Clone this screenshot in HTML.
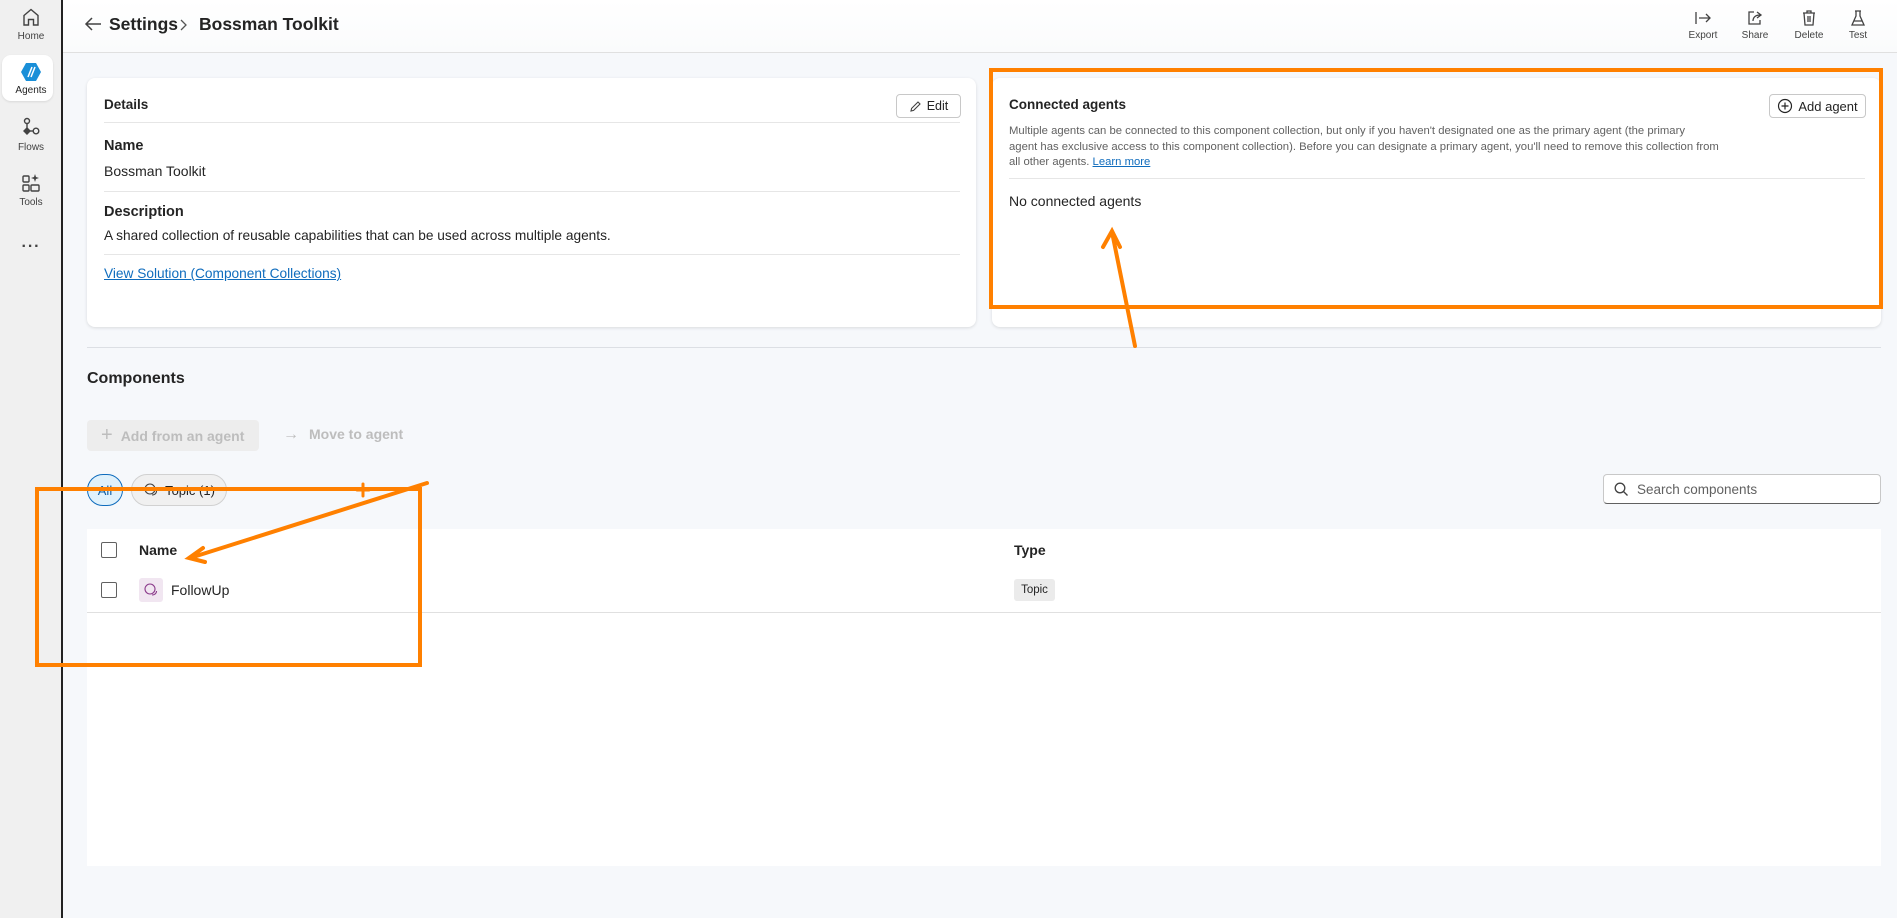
<!DOCTYPE html>
<html><head><meta charset="utf-8"><style>
*{box-sizing:border-box;margin:0;padding:0}
body{width:1897px;height:918px;overflow:hidden;font-family:"Liberation Sans",sans-serif;color:#242424;background:#f6f8fb;position:relative}
.a{position:absolute}
.side{left:0;top:0;width:63px;height:918px;background:#f0f0f0;border-right:2px solid #222}
.nav{position:absolute;left:0;width:62px;text-align:center;font-size:10px;color:#424242}
.hdr{left:63px;top:0;width:1834px;height:53px;background:linear-gradient(#fff,#fafbfc);border-bottom:1px solid #e0e0e0}
.card{background:#fff;border-radius:8px;box-shadow:0 1px 3px rgba(0,0,0,.12)}
.b{font-weight:bold}
.hl{height:1px;background:#e6e6e6}
.btn{border:1px solid #c8c8c8;border-radius:4px;background:#fff;font-size:12.5px;display:flex;align-items:center;justify-content:center;gap:5px}
.tb{font-size:10px;color:#424242;text-align:center;width:44px}
.or{border:4px solid #ff8000}
</style></head><body>
<div class="a side">
 <div class="nav" style="top:6px"><svg width="22" height="22" viewBox="0 0 22 22" fill="none" stroke="#424242" stroke-width="1.4"><path d="M4 9.5L11 3.5l7 6V19h-4.5v-5.5h-5V19H4z"/></svg><div>Home</div></div>
 <div class="a" style="left:2px;top:55px;width:51px;height:46px;background:#fff;border-radius:9px;box-shadow:0 1px 2px rgba(0,0,0,.1)"></div>
 <div class="nav" style="top:62px"><svg width="22" height="20" viewBox="0 0 22 20"><path d="M6 1h10l5 9-5 9H6L1 10z" fill="#1a8fd8"/><path d="M8 15l4-10M11 15l4-10" stroke="#fff" stroke-width="1.5"/></svg><div style="color:#242424">Agents</div></div>
 <div class="nav" style="top:117px"><svg width="22" height="22" viewBox="0 0 22 22" fill="none" stroke="#424242" stroke-width="1.4"><circle cx="7" cy="4" r="2.5"/><path d="M7 6.5V14"/><path d="M4 14l3-3 3 3-3 3z" fill="#424242"/><circle cx="16" cy="14" r="2.8"/><path d="M10 14h3"/></svg><div>Flows</div></div>
 <div class="nav" style="top:172px"><svg width="22" height="22" viewBox="0 0 22 22" fill="none" stroke="#424242" stroke-width="1.4"><rect x="3" y="4" width="6" height="6" rx="1"/><rect x="3" y="13" width="6" height="6" rx="1"/><rect x="11" y="13" width="8" height="6" rx="1"/><path d="M15 2l1 3 3 1-3 1-1 3-1-3-3-1 3-1z" fill="#424242" stroke="none"/></svg><div>Tools</div></div>
 <div class="nav" style="top:238px;font-size:16px;font-weight:bold;letter-spacing:1px">···</div>
</div>
<div class="a hdr"></div>
<svg class="a" style="left:84px;top:16px" width="18" height="16" viewBox="0 0 18 16" fill="none" stroke="#424242" stroke-width="1.5"><path d="M17 8H2M8 2L2 8l6 6"/></svg>
<div class="a b" style="left:109px;top:14px;font-size:17.5px">Settings</div>
<svg class="a" style="left:178px;top:19px" width="10" height="12" viewBox="0 0 10 12" fill="none" stroke="#555" stroke-width="1.3"><path d="M3 1l5 5-5 5"/></svg>
<div class="a b" style="left:199px;top:14px;font-size:17.5px">Bossman Toolkit</div>
<div class="a tb" style="left:1681px;top:9px"><svg width="20" height="18" viewBox="0 0 20 18" fill="none" stroke="#424242" stroke-width="1.3"><path d="M3 3v12M6 9h11M13 5l4 4-4 4"/></svg><div>Export</div></div>
<div class="a tb" style="left:1733px;top:9px"><svg width="20" height="18" viewBox="0 0 20 18" fill="none" stroke="#424242" stroke-width="1.3"><path d="M9 3H4v12h11v-4"/><path d="M8 12c0-4 3-6 7-6M12 3l4 3-4 3"/></svg><div>Share</div></div>
<div class="a tb" style="left:1787px;top:9px"><svg width="20" height="18" viewBox="0 0 20 18" fill="none" stroke="#424242" stroke-width="1.3"><path d="M4 4h12M8 4V2h4v2M5 4l1 12h8l1-12M9 7v6M11 7v6"/></svg><div>Delete</div></div>
<div class="a tb" style="left:1836px;top:9px"><svg width="20" height="18" viewBox="0 0 20 18" fill="none" stroke="#424242" stroke-width="1.3"><path d="M7 2h6M8 2v5L4 16h12L12 7V2M6 12h8"/></svg><div>Test</div></div>

<div class="a card" style="left:87px;top:78px;width:889px;height:249px"></div>
<div class="a b" style="left:104px;top:97px;font-size:13.5px">Details</div>
<div class="a btn" style="left:896px;top:94px;width:65px;height:24px"><svg width="13" height="13" viewBox="0 0 13 13" fill="none" stroke="#424242" stroke-width="1.1"><path d="M2 11l.6-2.6L9 2l2 2-6.4 6.4z"/></svg>Edit</div>
<div class="a hl" style="left:104px;top:122px;width:856px"></div>
<div class="a b" style="left:104px;top:138px;font-size:14.5px">Name</div>
<div class="a" style="left:104px;top:163px;font-size:14px">Bossman Toolkit</div>
<div class="a hl" style="left:104px;top:191px;width:856px"></div>
<div class="a b" style="left:104px;top:204px;font-size:14.5px">Description</div>
<div class="a" style="left:104px;top:228px;font-size:13.7px">A shared collection of reusable capabilities that can be used across multiple agents.</div>
<div class="a hl" style="left:104px;top:254px;width:856px"></div>
<div class="a" style="left:104px;top:266px;font-size:13.7px;color:#0f6cbd;text-decoration:underline">View Solution (Component Collections)</div>

<div class="a card" style="left:992px;top:78px;width:889px;height:249px"></div>
<div class="a" style="left:1009px;top:97px;font-size:13.5px;font-weight:bold">Connected agents</div>
<div class="a btn" style="left:1769px;top:94px;width:97px;height:24px;font-size:13px"><svg width="16" height="16" viewBox="0 0 16 16" fill="none" stroke="#242424" stroke-width="1.2"><circle cx="8" cy="8" r="6.5"/><path d="M8 4.5v7M4.5 8h7"/></svg>Add agent</div>
<div class="a" style="left:1009px;top:124px;width:745px;font-size:11.3px;line-height:15.5px;color:#616161">Multiple agents can be connected to this component collection, but only if you haven't designated one as the primary agent (the primary<br>agent has exclusive access to this component collection). Before you can designate a primary agent, you'll need to remove this collection from<br>all other agents. <span style="color:#0f6cbd;text-decoration:underline">Learn more</span></div>
<div class="a hl" style="left:1009px;top:178px;width:856px"></div>
<div class="a" style="left:1009px;top:193px;font-size:14px">No connected agents</div>

<div class="a" style="left:87px;top:347px;width:1794px;height:1px;background:#dcdfe4"></div>
<div class="a b" style="left:87px;top:370px;font-size:16px">Components</div>
<div class="a" style="left:87px;top:420px;width:172px;height:31px;background:#ededed;border-radius:4px;color:#bdbdbd;font-size:14px;font-weight:bold;display:flex;align-items:center;padding-left:14px;gap:8px"><span style="font-size:20px;font-weight:normal">+</span>Add from an agent</div>
<div class="a" style="left:283px;top:426px;color:#bdbdbd;font-size:14px;font-weight:bold;display:flex;gap:10px"><span style="font-weight:normal;font-size:16px">→</span>Move to agent</div>
<div class="a" style="left:87px;top:474px;width:36px;height:32px;border-radius:16px;background:#e0f1fb;border:1px solid #0f6cbd;font-size:13px;color:#115ea3;display:flex;align-items:center;justify-content:center">All</div>
<div class="a" style="left:131px;top:474px;width:96px;height:32px;border-radius:16px;background:#f0f0f0;border:1px solid #d1d1d1;font-size:13px;display:flex;align-items:center;justify-content:center;gap:6px"><svg width="16" height="16" viewBox="0 0 16 16" fill="none" stroke="#424242" stroke-width="1.1"><circle cx="7" cy="7" r="5"/><path d="M9 13c2.5 0 4.5-1.5 4.5-4"/></svg>Topic (1)</div>
<div class="a" style="left:1603px;top:474px;width:278px;height:30px;background:#fff;border:1px solid #c8c8c8;border-bottom-color:#616161;border-radius:4px;font-size:13.5px;color:#616161;display:flex;align-items:center;padding-left:10px;gap:8px"><svg width="15" height="15" viewBox="0 0 15 15" fill="none" stroke="#424242" stroke-width="1.3"><circle cx="6" cy="6" r="4.8"/><path d="M9.5 9.5l4 4"/></svg>Search components</div>

<div class="a" style="left:87px;top:529px;width:1794px;height:337px;background:#fff"></div>
<div class="a" style="left:101px;top:542px;width:16px;height:16px;border:1px solid #616161;border-radius:2px"></div>
<div class="a b" style="left:139px;top:542px;font-size:14px">Name</div>
<div class="a b" style="left:1014px;top:542px;font-size:14px">Type</div>
<div class="a" style="left:101px;top:582px;width:16px;height:16px;border:1px solid #616161;border-radius:2px"></div>
<div class="a" style="left:139px;top:578px;width:24px;height:24px;background:#f1e6f1;border-radius:3px"></div>
<svg class="a" style="left:143px;top:582px" width="16" height="16" viewBox="0 0 16 16" fill="none" stroke="#8b3a8b" stroke-width="1.1"><circle cx="7" cy="7" r="5"/><path d="M9 13c2.5 0 4.5-1.5 4.5-4"/></svg>
<div class="a" style="left:171px;top:582px;font-size:14px">FollowUp</div>
<div class="a" style="left:1014px;top:579px;width:41px;height:22px;background:#ebebeb;border-radius:3px;font-size:11.5px;display:flex;align-items:center;justify-content:center">Topic</div>
<div class="a" style="left:87px;top:612px;width:1794px;height:1px;background:#e0e0e0"></div>

<div class="a or" style="left:989px;top:68px;width:894px;height:241px"></div>
<div class="a or" style="left:35px;top:487px;width:387px;height:180px"></div>
<svg class="a" style="left:0;top:0" width="1897" height="918" fill="none" stroke="#ff8000" stroke-width="4" stroke-linecap="round">
<path d="M1135 346L1112 232M1103 247l9-16 8 16"/>
<path d="M427 483L190 558M203 548l-14 10 16 4"/>
<path d="M357 490h12M363 484v12" stroke-width="3"/>
</svg>
</body></html>
